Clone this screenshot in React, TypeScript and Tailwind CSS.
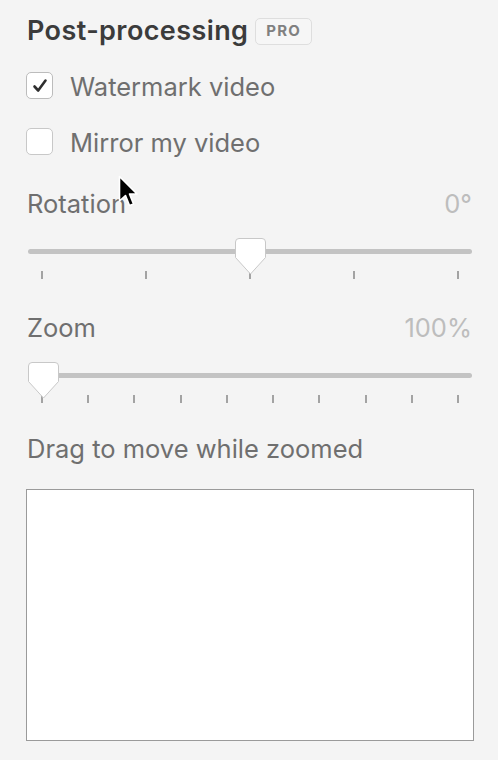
import React from "react";

function Slider({ ticks, pos }: { ticks: number; pos: number }) {
  const arr = Array.from({ length: ticks });
  return (
    <div className="relative h-[42px] mx-[2px]">
      <div className="pt-[11px]">
        <div className="h-[5px] rounded-full bg-[#c3c3c3]" />
      </div>
      <div className="flex justify-between px-[13px] mt-[17px]">
        {arr.map((_, i) => (
          <div key={i} className="w-[2px] h-[8px] bg-[#a3a3a3]" />
        ))}
      </div>
      <svg
        className="absolute top-0"
        style={{ left: `calc(${pos} * (100% - 31px))` }}
        width="31"
        height="37"
        viewBox="0 0 31 37"
      >
        <path
          d="M4 0.5 H27 Q30.5 0.5 30.5 4 V19.5 L15.5 36 L0.5 19.5 V4 Q0.5 0.5 4 0.5 Z"
          fill="#ffffff"
          stroke="#c8c8c8"
          strokeWidth="1"
        />
      </svg>
    </div>
  );
}

export default function App() {
  return (
    <div
      className="relative w-[498px] h-[760px] bg-[#f4f4f4] pl-[26px] pr-[24px] overflow-hidden"
      style={{ fontFamily: "Inter, 'Liberation Sans', sans-serif" }}
    >
      <div className="flex items-center h-[32px] mt-[15px] pt-px">
        <div className="text-[27px] font-semibold text-[#3b3b3b] tracking-[0.4px] ml-[1px]">
          Post-processing
        </div>
        <div className="ml-[7px] h-[27px] px-[10px] flex items-center rounded-[5px] border border-[#dedede] bg-[#f6f6f6] text-[15px] font-bold text-[#808080] tracking-[1.2px]">
          PRO
        </div>
      </div>

      <div className="flex items-center h-[27px] mt-[25px]">
        <div className="w-[27px] h-[27px] rounded-[5px] border border-[#bcbcbc] bg-white flex items-center justify-center">
          <svg width="18" height="18" viewBox="0 0 18 18">
            <path d="M3.5 9.5 L7.2 13.5 L14.5 3.5" fill="none" stroke="#2f2f2f" strokeWidth="2.6" strokeLinecap="round" strokeLinejoin="round" />
          </svg>
        </div>
        <div className="ml-[17px] text-[25.5px] text-[#6f6f6f] leading-[30px] pt-[2px]">Watermark video</div>
      </div>

      <div className="flex items-center h-[27px] mt-[29px]">
        <div className="w-[27px] h-[27px] rounded-[5px] border border-[#c8c8c8] bg-white" />
        <div className="ml-[17px] text-[25.5px] text-[#6f6f6f] leading-[30px] pt-[2px]">Mirror my video</div>
      </div>

      <div className="flex justify-between items-center h-[30px] mt-[34px] text-[25.5px] leading-[30px]">
        <div className="text-[#6f6f6f] ml-[1px]">Rotation</div>
        <div className="text-[#bdbdbd] mr-[2px]">0°</div>
      </div>

      <div className="mt-[19px]">
        <Slider ticks={5} pos={0.5} />
      </div>

      <div className="flex justify-between items-center h-[30px] mt-[33px] text-[25.5px] leading-[30px]">
        <div className="text-[#6f6f6f] ml-[1px]">Zoom</div>
        <div className="text-[#bdbdbd] mr-[2px]">100%</div>
      </div>

      <div className="mt-[19px]">
        <Slider ticks={10} pos={0} />
      </div>

      <div className="flex items-center h-[30px] mt-[30px] text-[25.5px] leading-[30px] text-[#6f6f6f] ml-[1px]">
        Drag to move while zoomed
      </div>

      <div className="mt-[25px] h-[252px] border border-[#9a9a9a] bg-white" />

      <svg className="absolute left-[118px] top-[175px]" width="22" height="34" viewBox="0 0 22 34">
        <path
          d="M1.5 1.5 L1.5 26 L7.5 20.5 L11.5 30.5 L15.5 29 L11.5 19 L19 19 Z"
          fill="#000000"
          stroke="#ffffff"
          strokeWidth="1.6"
          strokeLinejoin="round"
        />
      </svg>
    </div>
  );
}
